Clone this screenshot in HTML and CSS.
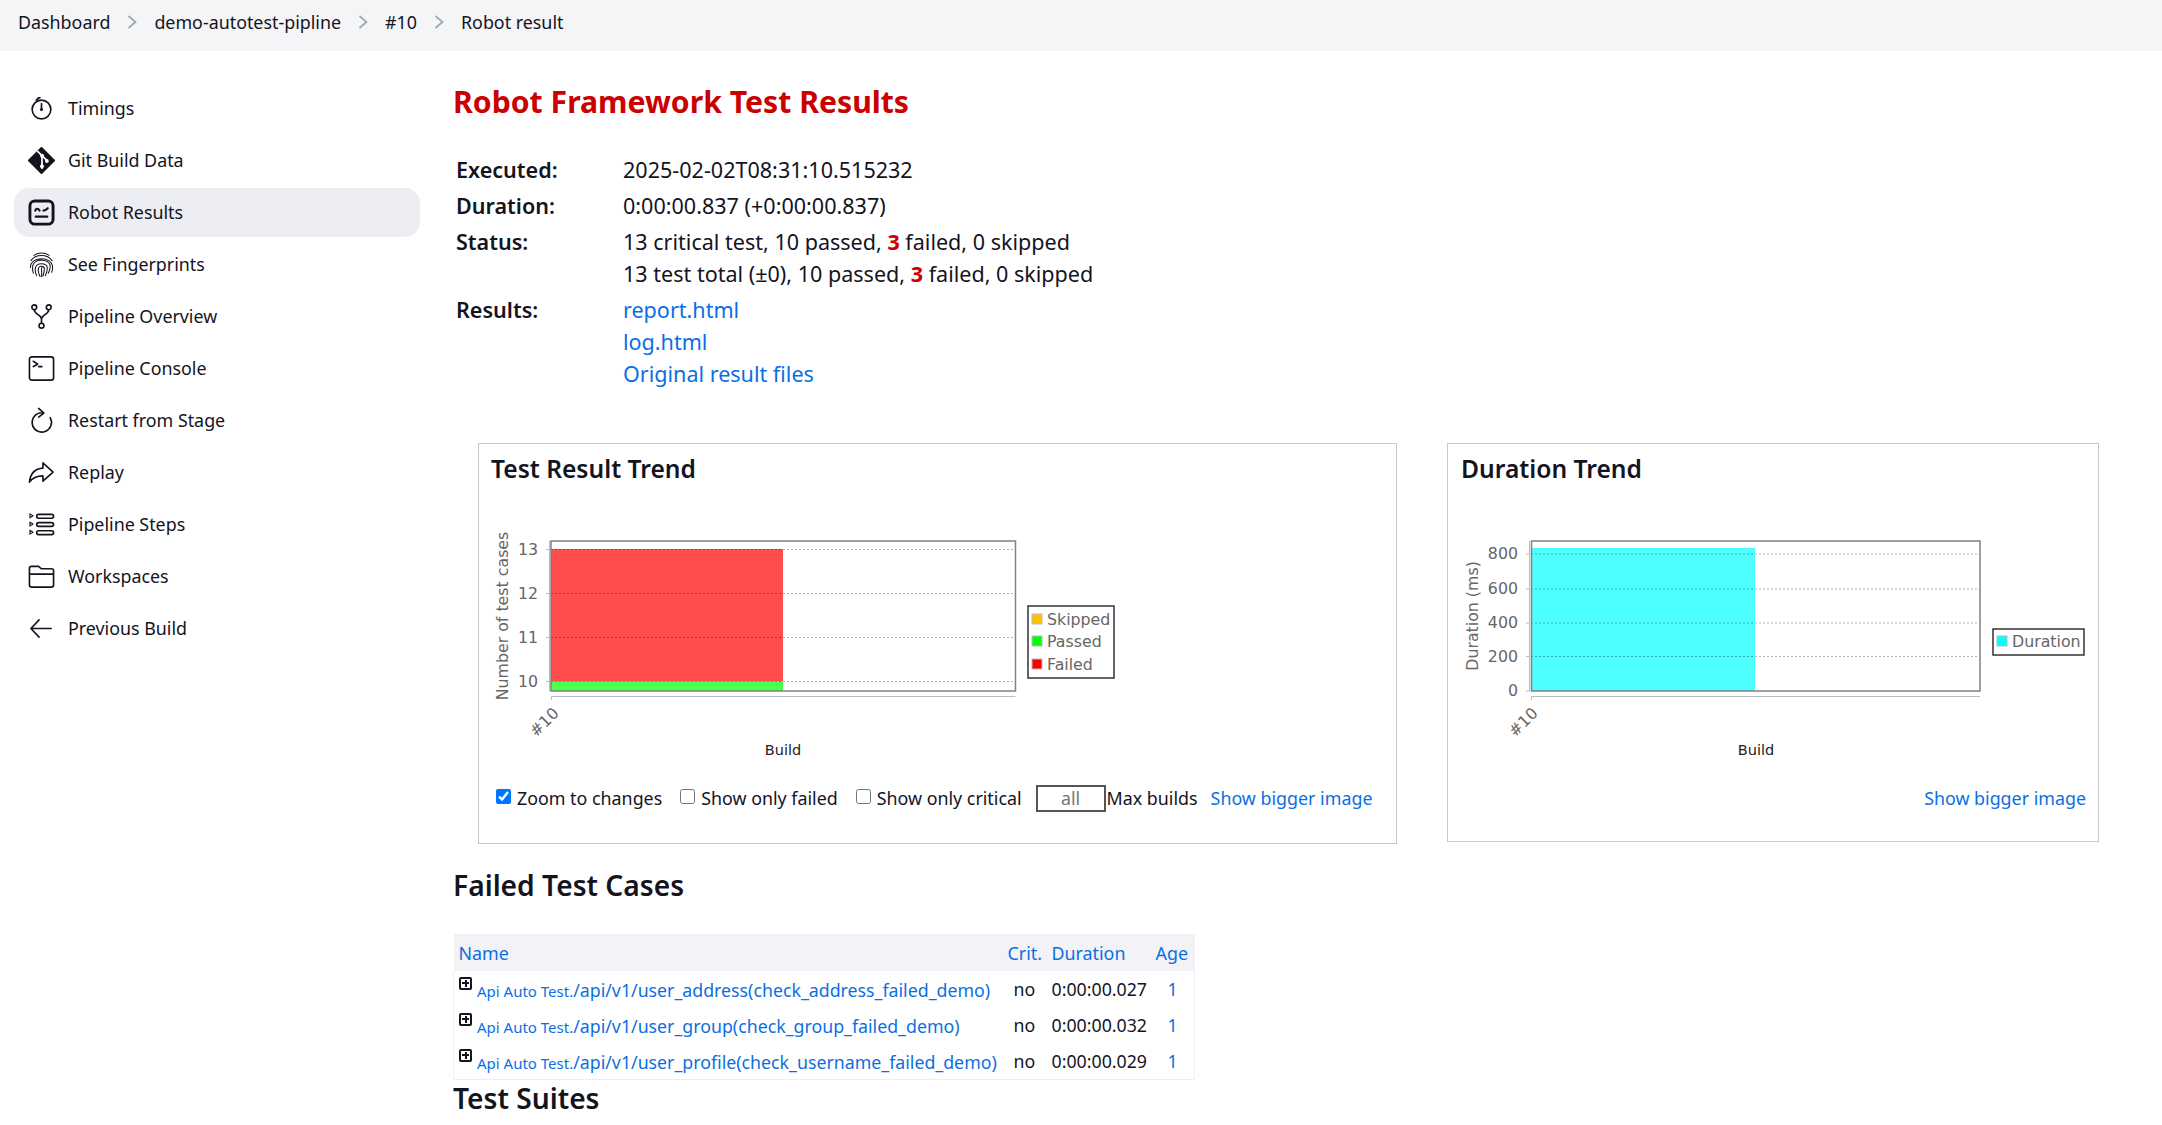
FILE: index.html
```html
<!DOCTYPE html>
<html lang="en">
<head>
    <meta charset="UTF-8">
    <title>Robot result</title>
    <link rel="stylesheet" href="styles.css">
</head>
<body>
    <nav class="breadcrumbs">
        <a href="#">Dashboard</a>
        <span class="crumb-sep"><svg viewBox="0 0 10 14" width="10" height="14"><path d="M1.500 1 8.500 7 1.500 13" /></svg></span>
        <a href="#">demo-autotest-pipline</a>
        <span class="crumb-sep"><svg viewBox="0 0 10 14" width="10" height="14"><path d="M1.500 1 8.500 7 1.500 13" /></svg></span>
        <a href="#">#10</a>
        <span class="crumb-sep"><svg viewBox="0 0 10 14" width="10" height="14"><path d="M1.500 1 8.500 7 1.500 13" /></svg></span>
        <a href="#">Robot result</a>
    </nav>

    <div class="page">
        <aside class="sidebar">
            <a class="side-item" href="#">
                <svg class="side-icon" viewBox="0 0 28 28"><circle cx="14" cy="15" r="9.7" /><path d="M14 15V9M11 3.600l-2.500 1.600M10.500 2.800h2" /><circle class="dot" cx="14" cy="15" r="1.600" /></svg>
                <span>Timings</span>
            </a>
            <a class="side-item" href="#">
                <svg class="side-icon" viewBox="0 0 28 28"><path class="solid" d="M14 1 27 14 14 27 1 14Z" /><path class="cut" d="M10 4.500 14.500 9v13M14.500 9l5.500 5.500" /><circle class="cut-dot" cx="14.500" cy="9" r="2" /><circle class="cut-dot" cx="14.500" cy="20" r="2" /><circle class="cut-dot" cx="19.500" cy="14.500" r="2" /></svg>
                <span>Git Build Data</span>
            </a>
            <a class="side-item side-item-active" href="#">
                <svg class="side-icon" viewBox="0 0 28 28"><rect class="heavy" x="2" y="2" width="24" height="24" rx="5" /><path class="heavy-thin" d="M7.500 12c1-2.500 3-2.500 4.500 0M16 12c1.500 0 3-1 4.500-2.500M8 18.300h12" /></svg>
                <span>Robot Results</span>
            </a>
            <a class="side-item" href="#">
                <svg class="side-icon" viewBox="0 0 28 28"><path class="thin" d="M6 4.500c5-3 11-3 16 0M3 10c5-7 17-7 22 0M2.500 17c0-12 23-12 23 0 0 2-.5 4-1 5M5.500 23c-1-3-1-5-.5-8 2-8 18-7 18 1 0 3-1 5-2 7M9 25.500c-1.500-3-2-6-1-9 2-5 12-4 12 1 0 3-.5 5-2 8M12.500 26.500c-1.500-3-2.500-6-1.500-9 1-2.500 6-2 6 1 0 2.500-.5 5-1.500 7.500M14 17.500c0 3 .5 6 0 9" /></svg>
                <span>See Fingerprints</span>
            </a>
            <a class="side-item" href="#">
                <svg class="side-icon" viewBox="0 0 28 28"><circle cx="6.500" cy="4.500" r="2.500" /><circle cx="21.500" cy="4.500" r="2.500" /><circle cx="14" cy="23.500" r="2.500" /><path d="M6.500 7c0 5 7.500 5 7.500 9.500V21M21.500 7c0 5-7.500 5-7.500 9.500" /></svg>
                <span>Pipeline Overview</span>
            </a>
            <a class="side-item" href="#">
                <svg class="side-icon" viewBox="0 0 28 28"><rect x="1.500" y="2" width="25" height="24" rx="2.500" /><path d="M5.500 6.500 10 9.500 5.500 12M11 12h3.500" /></svg>
                <span>Pipeline Console</span>
            </a>
            <a class="side-item" href="#">
                <svg class="side-icon" viewBox="0 0 28 28"><path d="M23 11A10 10 0 1 1 14.500 6M11 1.500l5.500 4.800L11 10.500" /></svg>
                <span>Restart from Stage</span>
            </a>
            <a class="side-item" href="#">
                <svg class="side-icon" viewBox="0 0 28 28"><path d="M15.500 4 26 13.500 15.500 23v-5.500C9 17.500 5 19 1.500 24 2.500 15 7 10 15.500 9.500Z" /></svg>
                <span>Replay</span>
            </a>
            <a class="side-item" href="#">
                <svg class="side-icon" viewBox="0 0 28 28"><rect x="9" y="3.500" width="17.500" height="4" rx="2" /><rect x="9" y="12" width="17.500" height="4" rx="2" /><rect x="9" y="20.500" width="17.500" height="4" rx="2" /><path class="thin" d="M2 3v4l3.200-2ZM2 11.500v4l3.200-2ZM2 20v4l3.200-2Z" /></svg>
                <span>Pipeline Steps</span>
            </a>
            <a class="side-item" href="#">
                <svg class="side-icon" viewBox="0 0 28 28"><path d="M1.500 6.500v16a2.500 2.500 0 0 0 2.500 2.500h20a2.500 2.500 0 0 0 2.500-2.500V8a2 2 0 0 0-2-2H14L11 3.500H3.500a2 2 0 0 0-2 2v6h25" /></svg>
                <span>Workspaces</span>
            </a>
            <a class="side-item" href="#">
                <svg class="side-icon" viewBox="0 0 28 28"><path d="M11.500 5 3 14l8.500 9M3.500 14H24" /></svg>
                <span>Previous Build</span>
            </a>
        </aside>

        <main class="content">
            <h1 class="page-title">Robot Framework Test Results</h1>

            <table class="summary">
                <tr><th>Executed:</th><td>2025-02-02T08:31:10.515232</td></tr>
                <tr><th>Duration:</th><td>0:00:00.837 (+0:00:00.837)</td></tr>
                <tr>
                    <th>Status:</th>
                    <td>13 critical test, 10 passed, <b class="fail">3</b> failed, 0 skipped<br>13 test total (±0), 10 passed, <b class="fail">3</b> failed, 0 skipped</td>
                </tr>
                <tr>
                    <th>Results:</th>
                    <td><a href="#">report.html</a><br><a href="#">log.html</a><br><a href="#">Original result files</a></td>
                </tr>
            </table>

            <div class="trends">
                <section class="trend-box trend-box-results">
                    <h3>Test Result Trend</h3>
                    <svg class="chart" viewBox="491 510 640 260" width="640" height="260">
                        <rect class="bar-fail" x="551" y="549" width="232" height="132" />
                        <rect class="bar-pass" x="551" y="681" width="232" height="10" />
                        <path class="grid" d="M551 549.500H1015M551 593.500H1015M551 637.500H1015M551 681.500H1015" />
                        <rect class="plot" x="551" y="541" width="464.500" height="150" />
                        <path class="axis" d="M551 696.500H1015.500M551.500 696v4M549.500 541v150M546 549.500h4M546 593.500h4M546 637.500h4M546 681.500h4" />
                        <g class="tick">
                            <text x="538" y="555" text-anchor="end">13</text>
                            <text x="538" y="599" text-anchor="end">12</text>
                            <text x="538" y="643" text-anchor="end">11</text>
                            <text x="538" y="687" text-anchor="end">10</text>
                        </g>
                        <text class="tick" text-anchor="middle" transform="translate(508 616) rotate(-90)">Number of test cases</text>
                        <text class="tick" text-anchor="middle" transform="translate(548 726) rotate(-45)">#10</text>
                        <text class="axis-name" x="783" y="755" text-anchor="middle">Build</text>
                        <rect class="legend" x="1028" y="606" width="86" height="72" />
                        <rect class="swatch" x="1032" y="614" width="10" height="10" fill="#ffc000" />
                        <rect class="swatch" x="1032" y="636" width="10" height="10" fill="#00ff00" />
                        <rect class="swatch" x="1032" y="659" width="10" height="10" fill="#ff0000" />
                        <g class="tick">
                            <text x="1047" y="625">Skipped</text>
                            <text x="1047" y="647">Passed</text>
                            <text x="1047" y="670">Failed</text>
                        </g>
                    </svg>
                    <div class="chart-controls">
                        <label><input type="checkbox" checked>Zoom to changes</label>
                        <label><input type="checkbox">Show only failed</label>
                        <label><input type="checkbox">Show only critical</label>
                        <input class="max-builds" type="text" value="all">
                        <span>Max builds</span>
                        <a href="#">Show bigger image</a>
                    </div>
                </section>

                <section class="trend-box trend-box-duration">
                    <h3>Duration Trend</h3>
                    <svg class="chart" viewBox="1461 510 630 260" width="630" height="260">
                        <rect class="bar-time" x="1531" y="548" width="224" height="143" />
                        <path class="grid" d="M1531 554H1980M1531 589H1980M1531 623H1980M1531 656.500H1980" />
                        <rect class="plot" x="1531.500" y="541" width="448.500" height="150" />
                        <path class="axis" d="M1531 696.500H1980M1531.500 696v4M1529.500 541v150M1526 554h4M1526 589h4M1526 623h4M1526 656.500h4M1526 691h4" />
                        <g class="tick">
                            <text x="1518" y="559" text-anchor="end">800</text>
                            <text x="1518" y="593.500" text-anchor="end">600</text>
                            <text x="1518" y="628" text-anchor="end">400</text>
                            <text x="1518" y="662" text-anchor="end">200</text>
                            <text x="1518" y="695.500" text-anchor="end">0</text>
                        </g>
                        <text class="tick" text-anchor="middle" transform="translate(1478 616) rotate(-90)">Duration (ms)</text>
                        <text class="tick" text-anchor="middle" transform="translate(1527 726) rotate(-45)">#10</text>
                        <text class="axis-name" x="1756" y="755" text-anchor="middle">Build</text>
                        <rect class="legend" x="1993" y="629" width="91" height="26" />
                        <rect class="swatch" x="1997" y="636" width="10" height="10" fill="#00ffff" />
                        <text class="tick" x="2012" y="647">Duration</text>
                    </svg>
                    <div class="chart-controls chart-controls-end">
                        <a href="#">Show bigger image</a>
                    </div>
                </section>
            </div>

            <h2 class="section-title section-failed">Failed Test Cases</h2>
            <table class="cases">
                <thead>
                    <tr>
                        <th class="col-name"><a href="#">Name</a></th>
                        <th class="col-crit"><a href="#">Crit.</a></th>
                        <th class="col-time"><a href="#">Duration</a></th>
                        <th class="col-age"><a href="#">Age</a></th>
                    </tr>
                </thead>
                <tbody>
                    <tr>
                        <td><span class="expand"></span><a href="#"><small>Api Auto Test.</small>/api/v1/user_address(check_address_failed_demo)</a></td>
                        <td class="crit">no</td>
                        <td>0:00:00.027</td>
                        <td class="age"><a href="#">1</a></td>
                    </tr>
                    <tr>
                        <td><span class="expand"></span><a href="#"><small>Api Auto Test.</small>/api/v1/user_group(check_group_failed_demo)</a></td>
                        <td class="crit">no</td>
                        <td>0:00:00.032</td>
                        <td class="age"><a href="#">1</a></td>
                    </tr>
                    <tr>
                        <td><span class="expand"></span><a href="#"><small>Api Auto Test.</small>/api/v1/user_profile(check_username_failed_demo)</a></td>
                        <td class="crit">no</td>
                        <td>0:00:00.029</td>
                        <td class="age"><a href="#">1</a></td>
                    </tr>
                </tbody>
            </table>
            <h2 class="section-title">Test Suites</h2>
        </main>
    </div>
</body>
</html>
```

FILE: styles.css
```css
/* page */
body {
    margin: 0;
    font-family: "Noto Sans", "Open Sans", sans-serif;
    font-size: 17.85px;
    color: #14141f;
    background-color: #fff;
}

a {
    color: #0b6fe3;
    text-decoration: none;
}

/* breadcrumb bar */
.breadcrumbs {
    display: flex;
    align-items: center;
    height: 51px;
    padding: 0 18px 7px;
    box-sizing: border-box;
    background-color: #f5f5f7;
}

.breadcrumbs a {
    color: #14141f;
}

.crumb-sep {
    display: flex;
    width: 44px;
    justify-content: center;
}

.crumb-sep svg {
    fill: none;
    stroke: #9aa8b8;
    stroke-width: 1.7;
}

.page {
    display: flex;
}

/* sidebar */
.sidebar {
    display: flex;
    flex-direction: column;
    gap: 3px;
    flex: none;
    width: 406px;
    margin: 33px 33px 0 14px;
}

.side-item {
    display: flex;
    align-items: center;
    gap: 13px;
    height: 49px;
    padding-left: 14px;
    border-radius: 15px;
    color: #14141f;
}

.side-item span {
    margin-top: -2px;
}

.side-item-active {
    background-color: #edeef3;
}

.side-icon {
    width: 27px;
    height: 27px;
    fill: none;
    stroke: #14141f;
    stroke-width: 1.7;
    stroke-linecap: round;
    stroke-linejoin: round;
}

.side-icon .dot { fill: #14141f; stroke: none; }
.side-icon .solid { fill: #14141f; stroke-width: 2; }
.side-icon .cut { stroke: #fff; stroke-width: 1.8; }
.side-icon .cut-dot { fill: #fff; stroke: none; }
.side-icon .heavy { stroke-width: 3; }
.side-icon .heavy-thin { stroke-width: 2.2; }
.side-icon .thin { stroke-width: 1.1; }

/* main column */
.content {
    flex: 1;
    padding-top: 31px;
}

.page-title {
    margin: 0 0 30px;
    font-size: 30.2px;
    line-height: 40px;
    font-weight: 700;
    color: #cc0000;
}

.summary {
    border-collapse: collapse;
    line-height: 32px;
    font-size: 21.55px;
}

.summary th {
    width: 167px;
    padding: 2px 0 2px 3px;
    text-align: left;
    vertical-align: top;
    font-weight: 600;
}

.summary td {
    padding: 2px 0;
}

.fail {
    color: #cc0000;
}

/* trend charts */
.trends {
    display: flex;
    align-items: flex-start;
    gap: 50px;
    margin: 51px 0 0 25px;
}

.trend-box {
    box-sizing: border-box;
    padding: 0 12px;
    border: 1px solid #c8c8c8;
}

.trend-box-results {
    width: 919px;
    height: 401px;
}

.trend-box-duration {
    width: 652px;
    height: 399px;
    padding-left: 13px;
}

.trend-box h3 {
    margin: 7px 0 0;
    font-size: 24.6px;
    line-height: 36px;
    font-weight: 600;
}

.chart {
    display: block;
    margin-top: 23px;
}

.chart .tick {
    font-family: "DejaVu Sans", sans-serif;
    font-size: 15.8px;
    fill: #666;
}

.chart .axis-name {
    font-family: "DejaVu Sans", sans-serif;
    font-size: 14.5px;
    fill: #222;
}

.bar-fail { fill: #ff4d4d; }
.bar-pass { fill: #4dff4d; }
.bar-time { fill: #4dffff; }

.grid {
    fill: none;
    stroke: #000;
    stroke-opacity: 0.3;
    stroke-dasharray: 2 2;
}

.plot {
    fill: none;
    stroke: #808080;
    stroke-width: 1.5;
}

.axis {
    fill: none;
    stroke: #bdbdbd;
}

.legend {
    fill: #fff;
    stroke: #333;
    stroke-width: 1.5;
}

.swatch {
    stroke: #bbb;
}

.chart-controls {
    display: flex;
    align-items: center;
    height: 27px;
    margin-top: 14.5px;
    padding-left: 5px;
    white-space: nowrap;
}

.chart-controls label {
    display: flex;
    align-items: center;
    margin-right: 18px;
}

.chart-controls label input {
    width: 15px;
    height: 15px;
    margin: 0 6px 4px 0;
}

.chart-controls label:nth-of-type(3) {
    margin-right: 14px;
}

.chart-controls a {
    margin-left: 13px;
}

.chart-controls-end {
    justify-content: flex-end;
}

.max-builds {
    box-sizing: border-box;
    width: 70px;
    height: 27px;
    margin-right: 1px;
    padding: 0;
    border: 2px solid #555;
    font: inherit;
    color: #777;
    text-align: center;
}

/* failed test table */
.section-title {
    margin: 0;
    font-size: 28.2px;
    line-height: 36px;
    font-weight: 600;
}

.section-failed {
    margin-top: 23px;
}

.cases {
    width: 742px;
    margin-top: 31px;
    border-collapse: collapse;
    table-layout: fixed;
    border-bottom: 1px solid #eee;
}

.cases th {
    height: 37px;
    padding: 0;
    background-color: #f2f2f7;
    text-align: left;
    font-weight: 400;
}

.col-name { width: 554px; }
.col-crit { width: 44px; }
.col-time { width: 104px; }

.cases .col-name { padding-left: 5px; box-sizing: border-box; }

.cases td {
    height: 36px;
    padding: 0;
    white-space: nowrap;
    font-size: 17.75px;
}

.cases td:first-child {
    padding-left: 5px;
    border-left: 1px solid #f2f2f7;
}

.cases td.crit {
    padding-left: 6px;
}

.cases td.age {
    padding-left: 12px;
    border-right: 1px solid #f2f2f7;
}

.cases small {
    font-size: 15px;
}

.expand {
    display: inline-block;
    box-sizing: border-box;
    width: 13px;
    height: 13px;
    margin-right: 5px;
    border: 2px solid #14141f;
    border-radius: 2px;
    vertical-align: 7px;
    background:
        linear-gradient(#14141f, #14141f) center / 7px 2px no-repeat,
        linear-gradient(#14141f, #14141f) center / 2px 7px no-repeat;
}
```
